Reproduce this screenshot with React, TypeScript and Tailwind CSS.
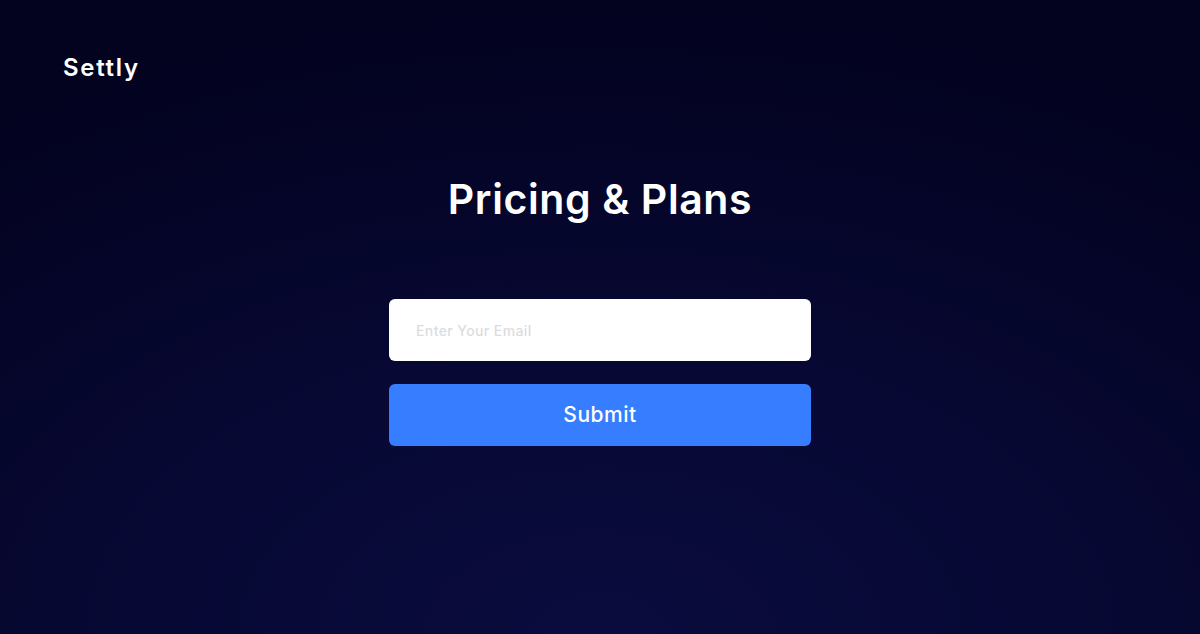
import React from "react";

export default function App() {
  return (
    <div className="w-[1200px] h-[634px] overflow-hidden bg-[radial-gradient(ellipse_90%_100%_at_50%_100%,#0a0c3e_0%,#070833_45%,#03021f_100%)] font-['Inter',sans-serif] text-white flex flex-col">
      <header className="pl-[63px] pt-[52px] h-[104px]">
        <div className="text-[24px] font-semibold tracking-[1.7px] leading-[32px]">Settly</div>
      </header>
      <main className="flex flex-col items-center">
        <h1 className="mt-[71px] text-[41px] font-semibold leading-[48px] tracking-[0.6px]">Pricing &amp; Plans</h1>
        <form className="mt-[76px] w-[422px] flex flex-col gap-[23px]" onSubmit={(e) => e.preventDefault()}>
          <input
            type="email"
            placeholder="Enter Your Email"
            className="h-[62px] w-full rounded-[6px] bg-white px-[27px] text-[14px] font-medium tracking-[0.4px] text-gray-800 placeholder:text-[#dcdcdf] outline-none"
          />
          <button
            type="submit"
            className="h-[62px] w-full rounded-[6px] bg-[#377dff] text-[21px] font-medium tracking-[0.5px] text-white"
          >
            Submit
          </button>
        </form>
      </main>
    </div>
  );
}
